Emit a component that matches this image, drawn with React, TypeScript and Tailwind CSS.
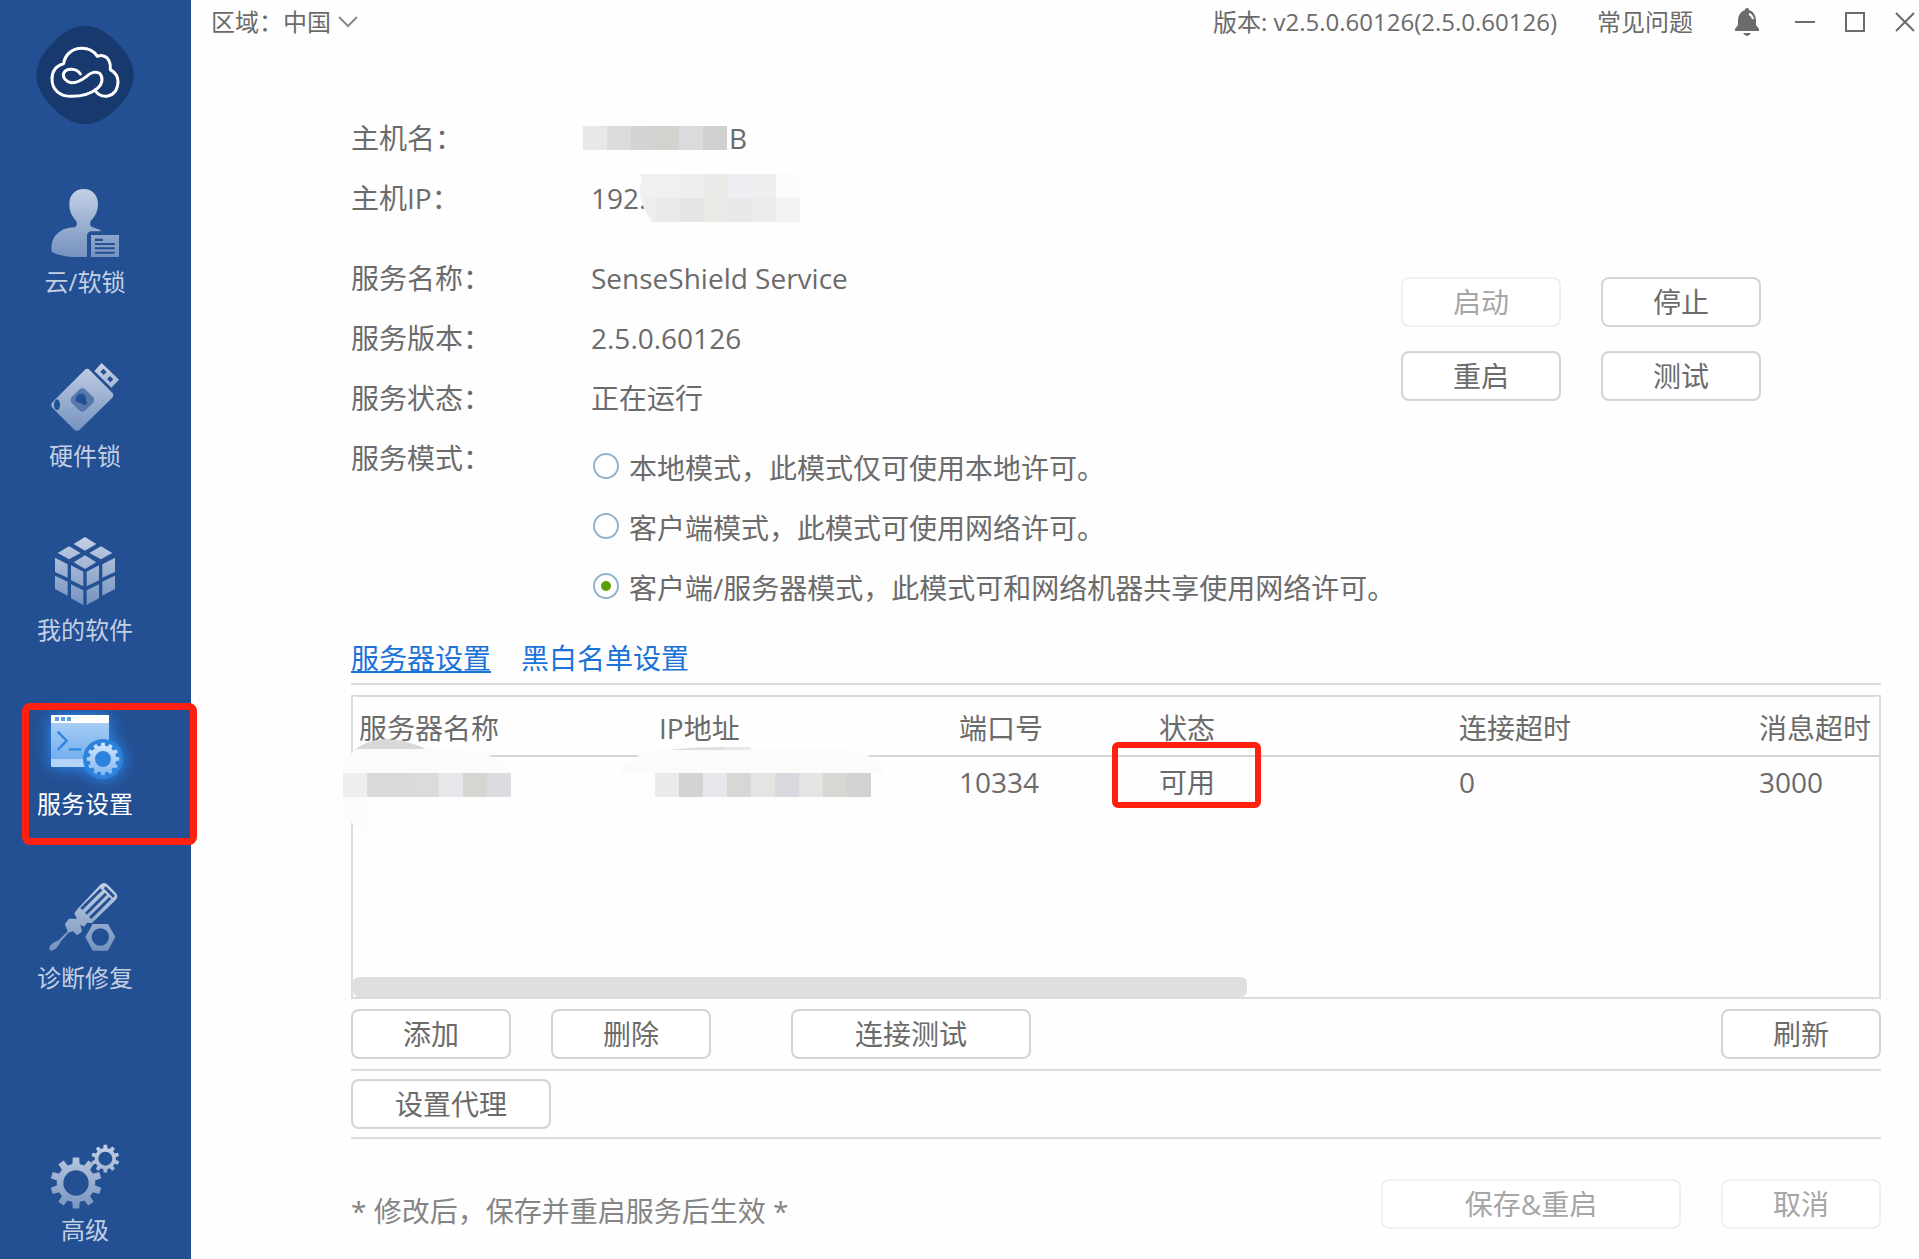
import { useState } from "react";
import type { ReactNode } from "react";

const MODES = [
    { id: "local", text: "本地模式，此模式仅可使用本地许可。" },
    { id: "client", text: "客户端模式，此模式可使用网络许可。" },
    { id: "server", text: "客户端/服务器模式，此模式可和网络机器共享使用网络许可。" },
];

// Outline of a toothed wheel centred on (cx, cy), with a round hole.
function gearPath(cx: number, cy: number, outer: number, root: number, hole: number, teeth: number) {
    const step = (Math.PI * 2) / teeth;
    const at = (r: number, a: number) => `${(cx + r * Math.cos(a)).toFixed(1)} ${(cy + r * Math.sin(a)).toFixed(1)}`;
    let d = "";
    for (let i = 0; i < teeth; i++) {
        const a = i * step - Math.PI / 2;
        d += `${i === 0 ? "M" : "L"}${at(root, a - step * 0.3)}L${at(outer, a - step * 0.2)}L${at(outer, a + step * 0.2)}L${at(root, a + step * 0.3)}`;
    }
    return `${d}ZM${cx - hole} ${cy}a${hole} ${hole} 0 1 0 ${hole * 2} 0a${hole} ${hole} 0 1 0 ${-hole * 2} 0Z`;
}

function Fade({ id }: { id: string }) {
    return (
        <defs>
            <linearGradient id={id} gradientUnits="userSpaceOnUse" x1="0" y1="0" x2="0" y2="204">
                <stop offset="0" stopColor="#c4d0e4" />
                <stop offset="1" stopColor="#7592c0" />
            </linearGradient>
        </defs>
    );
}

function Logo() {
    return (
        <svg className="h-[100px] w-[100px]" viewBox="105 74 300 300" fill="none">
            <path
                fill="#18396d"
                d="M255 77C292 77 322 96 350 126C380 156 401 188 401 225C401 261 380 294 350 324C322 352 290 372 255 372C220 372 188 352 160 324C130 294 109 261 109 225C109 188 130 156 160 126C188 96 218 77 255 77Z"
            />
            <g stroke="#fff" strokeWidth="9" strokeLinecap="round" strokeLinejoin="round">
                <path d="M288 274C297 286 310 289 323 287C343 283 354 266 354 243C354 227 343 215 331 208C333 187 325 169 308 166C303 165 298 166 292 168C281 151 264 144 245 144C216 144 194 164 191 190C167 197 156 213 156 236C156 269 180 288 214 288C249 288 274 279 292 264C309 251 309 230 300 220C289 211 272 216 259 229C243 241 229 249 214 247C197 244 187 231 191 219C198 202 230 202 241 221" />
            </g>
        </svg>
    );
}

function UserIcon() {
    return (
        <svg className="h-[68px] w-[68px]" viewBox="0 0 204 204">
            <Fade id="fade-user" />
            <g fill="url(#fade-user)">
                <path d="M98 0C125 0 142 20 141 48C140 72 128 85 119 97C116 108 118 113 125 115L150 124L148 127H122Q108 127 108 141V204H70C40 203 15 196 2 188Q-1 162 8 148C22 125 45 115 70 115C80 111 78 103 76 97C66 85 55 70 55 48C54 20 71 0 98 0Z" />
                <path fillRule="evenodd" d="M120 138H204V204H120ZM132 149V156H156V149ZM132 162V168H191V162ZM132 175V181H191V175ZM132 188V194H191V188Z" />
            </g>
        </svg>
    );
}

function UsbIcon() {
    return (
        <svg className="h-[68px] w-[68px]" viewBox="0 0 204 204">
            <Fade id="fade-usb" />
            <g fill="url(#fade-usb)">
                <path d="M101 21Q108 14 116 21L184 89Q190 96 184 104L86 200Q78 207 70 200L4 134Q-3 126 4 118Z" />
                <path fillRule="evenodd" d="M152 0L204 50L181 74L130 24ZM157 17L148 26L158 36L167 27ZM177 39L168 48L178 58L187 49Z" />
            </g>
            <rect x="65" y="82" width="58" height="58" rx="14" fill="#5878ad" transform="rotate(45 94 111)" />
            <path fill="#235093" d="M90 92C102 92 107 101 105 112C111 119 107 128 98 126C94 120 84 121 77 117C70 108 77 92 90 92Z" />
            <ellipse cx="18" cy="125" rx="9" ry="16" fill="#235093" />
        </svg>
    );
}

function CubeIcon() {
    const left = "M0 62L38 82V122L0 105ZM0 116L38 134V176L0 156ZM48 85L85 104V148L48 130ZM48 142L85 160V204L48 184Z";
    return (
        <svg className="h-[68px] w-[68px]" viewBox="-12 0 204 204">
            <Fade id="fade-cube" />
            <g fill="url(#fade-cube)">
                <path d="M90 0L124 21L90 41L56 21ZM42 28L77 48L42 67L8 48ZM138 28L172 48L138 67L103 48ZM90 55L124 76L90 96L56 76Z" />
                <path d={left} />
                <path d={left} transform="translate(180 0) scale(-1 1)" />
            </g>
        </svg>
    );
}

function ServiceIcon() {
    return (
        <svg
            className="h-[68px] w-[68px] overflow-visible drop-shadow-[0_0_8px_#2f8df5]"
            viewBox="0 -12 204 204"
        >
            <defs>
                <linearGradient id="window-body" x1="0" y1="0" x2="0" y2="1">
                    <stop offset="0" stopColor="#a6cdf6" />
                    <stop offset="1" stopColor="#73aeee" />
                </linearGradient>
                <linearGradient id="window-gear" x1="0" y1="0" x2="0" y2="1">
                    <stop offset="0" stopColor="#d5e7fc" />
                    <stop offset="1" stopColor="#82b7f1" />
                </linearGradient>
            </defs>
            <rect width="174" height="156" rx="4" fill="#b4d4f7" />
            <path fill="url(#window-body)" d="M0 24H174V132H0Z" />
            <path fill="#fff" d="M4 0H170Q174 0 174 4V24H0V4Q0 0 4 0Z" />
            <path fill="#5ba0ec" d="M12 6H24V18H12ZM30 6H42V18H30ZM48 6H60V18H48Z" />
            <path fill="none" stroke="#2f86e0" strokeWidth="7" d="M20 50L47 77L20 105M54 103H90" />
            <circle cx="156" cy="132" r="60" fill="#2d82dc" />
            <path fill="url(#window-gear)" fillRule="evenodd" d={gearPath(156, 132, 49, 40, 24, 12)} />
        </svg>
    );
}

function RepairIcon() {
    return (
        <svg className="h-[68px] w-[68px] overflow-visible" viewBox="4 7 204 204">
            <Fade id="fade-repair" />
            <g fill="url(#fade-repair)">
                <path
                    fillRule="evenodd"
                    d="M152 6Q163 -4 174 6L198 30Q208 41 198 52L126 122L112 120L104 132L92 126L96 140L96 148L82 158L70 146L56 150L32 178C26 192 18 202 4 204Q-3 202 0 192C6 180 18 178 28 172L54 146L50 136L46 124L58 108L72 108L82 108L74 92L84 78ZM152 17L92 76L98 82L158 23ZM166 30L106 90L112 96L172 36ZM179 43L118 103L125 109L185 49ZM168 11L162 17L190 45L196 39Z"
                />
                <path fillRule="evenodd" d="M107 163L129 124H175L197 163L175 204H129ZM152 137A26 26 0 1 0 152 189A26 26 0 1 0 152 137Z" />
            </g>
        </svg>
    );
}

function GearsIcon() {
    return (
        <svg className="h-[68px] w-[68px] overflow-visible" viewBox="0 -14 204 204">
            <Fade id="fade-gears" />
            <g fill="url(#fade-gears)" fillRule="evenodd">
                <path d={gearPath(75, 115, 77, 58, 38, 10)} />
                <path d={gearPath(163, 42, 42, 32, 21, 10)} />
            </g>
        </svg>
    );
}

function NavItem({ icon, label, active }: { icon: ReactNode; label: string; active?: boolean }) {
    return (
        <a href="#" className={`relative flex w-full flex-col items-center gap-[9px] ${active ? "text-white" : "text-[#c3cfe3]"}`}>
            {icon}
            <span className="text-2xl leading-8">{label}</span>
            {active && (
                <span className="pointer-events-none absolute -top-2 -right-[27px] left-[22px] h-[142px] rounded-lg border-[7px] border-[#ff2010]" />
            )}
        </a>
    );
}

function Sidebar() {
    return (
        <aside className="flex w-[191px] shrink-0 flex-col items-center bg-[#235093] pt-[25px] pr-[21px] pb-[13px]">
            <Logo />
            <nav className="mt-16 flex w-full flex-1 flex-col items-center gap-[65px]">
                <NavItem icon={<UserIcon />} label="云/软锁" />
                <NavItem icon={<UsbIcon />} label="硬件锁" />
                <NavItem icon={<CubeIcon />} label="我的软件" />
                <NavItem icon={<ServiceIcon />} label="服务设置" active />
                <NavItem icon={<RepairIcon />} label="诊断修复" />
                <a href="#" className="mt-auto flex flex-col items-center gap-[6px] text-[#c3cfe3]">
                    <GearsIcon />
                    <span className="text-2xl leading-8">高级</span>
                </a>
            </nav>
        </aside>
    );
}

function TitleBar() {
    return (
        <header className="flex h-11 items-center pl-5 text-2xl">
            <label htmlFor="region">区域：</label>
            <div className="flex items-center">
                <select id="region" className="w-[52px] appearance-none bg-transparent outline-none">
                    <option>中国</option>
                </select>
                <svg className="ml-[3px] h-5 w-5" viewBox="0 0 20 20" fill="none" stroke="#8a8a8a" strokeWidth="2">
                    <path d="M1 5L10 14L19 5" />
                </svg>
            </div>
            <span className="ml-auto">版本: v2.5.0.60126(2.5.0.60126)</span>
            <a href="#" className="ml-10">常见问题</a>
            <button aria-label="通知" className="ml-10">
                <svg className="h-7 w-7" viewBox="0 0 28 28" fill="#6b6b6b">
                    <path d="M14 0Q16 0 16 2C21 4 23 8 23 13V17L26 21V23H2V21L5 17V13C5 8 7 4 12 2Q12 0 14 0Z" />
                    <path d="M10 25H18Q14 31 10 25Z" />
                    <path d="M16 6Q19 7 20 11" fill="none" stroke="#fff" strokeWidth="2" />
                </svg>
            </button>
            <div className="flex items-center gap-[30px] pr-1 pl-[34px]">
                <button aria-label="最小化">
                    <svg className="h-5 w-5" viewBox="0 0 20 20" stroke="#6b6b6b" strokeWidth="2">
                        <path d="M0 10H20" />
                    </svg>
                </button>
                <button aria-label="最大化">
                    <svg className="h-5 w-5" viewBox="0 0 20 20" fill="none" stroke="#6b6b6b" strokeWidth="2">
                        <path d="M1 1H19V19H1Z" />
                    </svg>
                </button>
                <button aria-label="关闭">
                    <svg className="h-5 w-5" viewBox="0 0 20 20" stroke="#6b6b6b" strokeWidth="2">
                        <path d="M1 1L19 19M19 1L1 19" />
                    </svg>
                </button>
            </div>
        </header>
    );
}

function Btn({ children, className = "w-40", disabled }: { children: ReactNode; className?: string; disabled?: boolean }) {
    return (
        <button
            disabled={disabled}
            className={`h-[50px] rounded-lg border-2 bg-white ${disabled ? "border-[#f0f0f0] text-[#a6a6a6]" : "border-[#d4d4d4]"} ${className}`}
        >
            {children}
        </button>
    );
}

function Row({ label, children }: { label: string; children: ReactNode }) {
    return (
        <div className="flex h-[60px] items-center">
            <dt className="w-60 shrink-0">{label}</dt>
            <dd className="flex items-center">{children}</dd>
        </div>
    );
}

// Block mosaic that hides a private value; one colour per 24px cell.
function Mosaic({ rows, className }: { rows: string[][]; className: string }) {
    return (
        <svg className={className} viewBox={`0 0 ${rows[0].length * 24} ${rows.length * 24}`} shapeRendering="crispEdges" aria-hidden="true">
            {rows.map((cells, y) =>
                cells.map((fill, x) => <rect key={`${x}-${y}`} x={x * 24} y={y * 24} width="24" height="24" fill={fill} />)
            )}
        </svg>
    );
}

function ServiceInfo() {
    const [mode, setMode] = useState("server");
    return (
        <section className="flex pt-16">
            <dl className="flex-1">
                <Row label="主机名：">
                    <Mosaic
                        className="-ml-2 h-6 w-36"
                        rows={[["#e9e8e7", "#dbdcde", "#d4d3d1", "#d2d2cf", "#dadbdd", "#cfd1d0"]]}
                    />
                    <span className="ml-[2px]">B</span>
                </Row>
                <Row label="主机IP：">
                    <span>192.</span>
                    <svg className="-ml-[6px] h-12 w-40" viewBox="0 0 160 48" aria-hidden="true">
                        <clipPath id="ip-clip">
                            <path d="M0 0H154Q160 2 160 10V48H12Q-5 24 2 6Z" />
                        </clipPath>
                        <g clipPath="url(#ip-clip)" shapeRendering="crispEdges">
                            <path fill="#f1f0ef" d="M0 0H16V24H0Z" />
                            <path fill="#eff0f2" d="M16 0H40V24H16Z" />
                            <path fill="#efefee" d="M40 0H64V24H40Z" />
                            <path fill="#ebeae8" d="M64 0H88V24H64Z" />
                            <path fill="#eeeff2" d="M88 0H112V24H88Z" />
                            <path fill="#efefed" d="M112 0H136V24H112Z" />
                            <path fill="#fafbfb" d="M136 0H160V24H136Z" />
                            <path fill="#ededed" d="M0 24H16V48H0Z" />
                            <path fill="#e8eae9" d="M16 24H40V48H16Z" />
                            <path fill="#e6e6e8" d="M40 24H64V48H40Z" />
                            <path fill="#eae9e6" d="M64 24H88V48H64Z" />
                            <path fill="#e8e8e8" d="M88 24H112V48H88Z" />
                            <path fill="#ebebeb" d="M112 24H136V48H112Z" />
                            <path fill="#f3f3f3" d="M136 24H160V48H136Z" />
                        </g>
                    </svg>
                </Row>
                <div className="h-5" />
                <Row label="服务名称：">SenseShield Service</Row>
                <Row label="服务版本：">2.5.0.60126</Row>
                <Row label="服务状态：">正在运行</Row>
                <div className="flex">
                    <dt className="flex h-[60px] w-60 shrink-0 items-center">服务模式：</dt>
                    <dd className="pt-[10px]">
                        {MODES.map((m) => (
                            <label key={m.id} className="flex h-[60px] items-center gap-[10px] pl-[2px] whitespace-nowrap">
                                <span className="relative mb-1 flex">
                                    <input
                                        type="radio"
                                        name="mode"
                                        value={m.id}
                                        checked={mode === m.id}
                                        onChange={() => setMode(m.id)}
                                        className="peer h-[26px] w-[26px] appearance-none rounded-full border-2 border-[#92b4cc] bg-white"
                                    />
                                    <span className="pointer-events-none absolute inset-2 rounded-full bg-[#5a9e05] opacity-0 peer-checked:opacity-100" />
                                </span>
                                {m.text}
                            </label>
                        ))}
                    </dd>
                </div>
            </dl>
            <div className="mt-[169px] mr-[120px] grid grid-cols-2 content-start gap-x-10 gap-y-6">
                <Btn disabled>启动</Btn>
                <Btn>停止</Btn>
                <Btn>重启</Btn>
                <Btn>测试</Btn>
            </div>
        </section>
    );
}

function ServerTable() {
    return (
        <div className="relative mt-[10px] flex min-h-[304px] flex-col border-2 border-[#dcdcdc]">
            <table className="w-full table-fixed text-left whitespace-nowrap">
                <colgroup>
                    <col className="w-[300px]" />
                    <col className="w-[300px]" />
                    <col className="w-[200px]" />
                    <col className="w-[300px]" />
                    <col className="w-[300px]" />
                    <col />
                </colgroup>
                <thead>
                    <tr className="h-[59px] border-b-2 border-[#d6d6d6] [&>th]:pt-1 [&>th]:pl-[6px] [&>th]:font-normal">
                        <th>服务器名称</th>
                        <th>IP地址</th>
                        <th>端口号</th>
                        <th>状态</th>
                        <th>连接超时</th>
                        <th>消息超时</th>
                    </tr>
                </thead>
                <tbody>
                    <tr className="h-[52px] [&>td]:pb-[2px] [&>td]:pl-[6px]">
                        <td />
                        <td />
                        <td>10334</td>
                        <td className="relative">
                            可用
                            <span className="pointer-events-none absolute -top-[15px] -left-[41px] h-[66px] w-[149px] rounded-md border-[6px] border-[#ff2010]" />
                        </td>
                        <td>0</td>
                        <td>3000</td>
                    </tr>
                </tbody>
            </table>
            <div className="mt-auto h-5 w-[894px] max-w-full rounded-md bg-[#dfdfdf]" />

            {/* smudges over the first two cells */}
            <svg className="pointer-events-none absolute top-[42px] -left-[10px] h-[94px] w-[170px]" viewBox="0 0 170 94" aria-hidden="true">
                <path fill="#d8d8d8" d="M10 12Q24 0 45 0Q70 2 86 12Z" />
                <path fill="#fbfbfb" d="M0 34V26Q4 16 14 10H86L120 11Q152 12 168 34Z" />
                <path fill="#fbfbfb" d="M0 58H24V94Q10 88 0 74Z" />
            </svg>
            <svg className="pointer-events-none absolute top-[49px] left-[265px] h-[27px] w-[268px]" viewBox="0 0 268 27" aria-hidden="true">
                <path fill="#dedede" d="M50 4Q70 1 106 1V4Z" />
                <path fill="#e9eaee" d="M106 1H133V4H106Z" />
                <path fill="#fbfbfb" d="M0 27Q16 6 40 4H230Q256 6 268 27Z" />
            </svg>
            <Mosaic
                className="pointer-events-none absolute top-[76px] -left-[10px] h-6 w-[168px]"
                rows={[["#efeeed", "#dadad9", "#d9dadc", "#dbdbdc", "#e7e8ec", "#d5d5d2", "#dcdce0"]]}
            />
            <Mosaic
                className="pointer-events-none absolute top-[76px] left-[302px] h-6 w-[216px]"
                rows={[["#ebeae9", "#d3d3d4", "#e7e8eb", "#d9d7d5", "#e5e4e3", "#d8d9de", "#e4e4e2", "#d7d7d4", "#d2d2d3"]]}
            />
        </div>
    );
}

export default function App() {
    return (
        <div className="flex min-h-screen bg-[#fefefe] font-['Open_Sans','Noto_Sans_CJK_SC',sans-serif] text-[#6b6b6b]">
            <Sidebar />
            <div className="flex min-w-0 flex-1 flex-col">
                <TitleBar />
                <main className="flex flex-1 flex-col pr-[38px] pb-[30px] pl-40 text-[28px] leading-9">
                    <ServiceInfo />
                    <div className="flex gap-[30px] border-b-2 border-[#dcdcdc] pt-[22px] pb-[7px] text-[#1a73d9]">
                        <a href="#" className="underline decoration-2 underline-offset-2">服务器设置</a>
                        <a href="#">黑白名单设置</a>
                    </div>
                    <ServerTable />
                    <div className="flex border-b-2 border-[#dcdcdc] py-[10px]">
                        <Btn>添加</Btn>
                        <Btn className="ml-10 w-40">删除</Btn>
                        <Btn className="ml-20 w-60">连接测试</Btn>
                        <Btn className="ml-auto w-40">刷新</Btn>
                    </div>
                    <div className="border-b-2 border-[#dcdcdc] py-2">
                        <Btn className="w-[200px]">设置代理</Btn>
                    </div>
                    <footer className="mt-auto flex items-end pt-10">
                        <p className="text-[#858585]">* 修改后，保存并重启服务后生效 *</p>
                        <Btn disabled className="ml-auto w-[300px]">保存&amp;重启</Btn>
                        <Btn disabled className="ml-10 w-40">取消</Btn>
                    </footer>
                </main>
            </div>
        </div>
    );
}
